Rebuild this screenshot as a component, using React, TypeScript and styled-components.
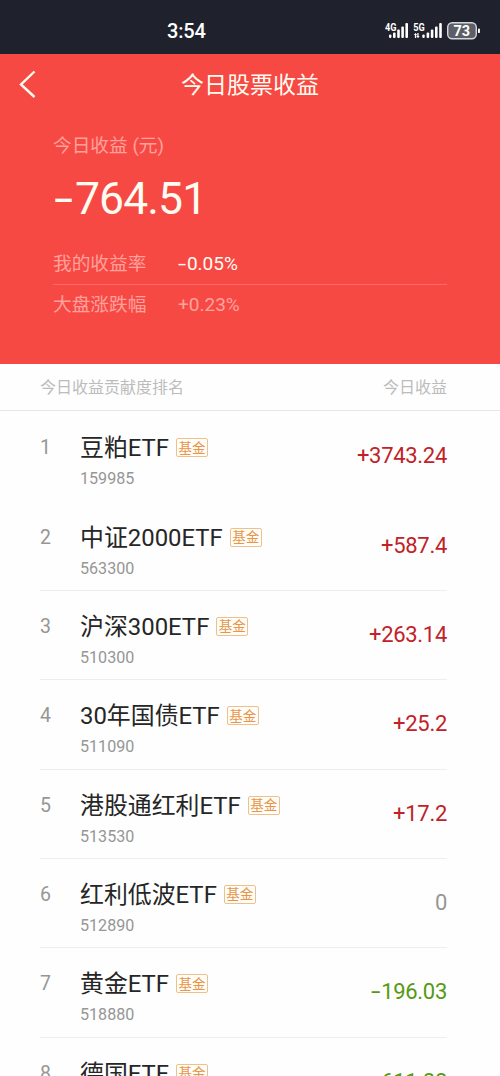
import React from "react";
import styled, { createGlobalStyle } from "styled-components";

const Global = createGlobalStyle`
  * { box-sizing: border-box; }
  html, body { margin: 0; padding: 0; }
  body {
    width: 500px;
    height: 1076px;
    overflow: hidden;
    background: #fefefe;
    font-family: Roboto, "Noto Sans CJK SC", sans-serif;
    white-space: nowrap;
  }
`;

const Screen = styled.div`
  width: 500px;
  height: 1076px;
  overflow: hidden;
  display: flex;
  flex-direction: column;
`;

const StatusBar = styled.header`
  flex: none;
  height: 54px;
  background: #1f222d;
  color: #fff;
  display: flex;
  justify-content: space-between;
  padding: 0 19px 0 167px;
`;

const Clock = styled.time`
  font-size: 20px;
  font-weight: 500;
  line-height: 24px;
  letter-spacing: -0.2px;
  margin-top: 19px;
`;

const StatusIcons = styled.div`
  display: flex;
  align-items: center;
  height: 20px;
  margin-top: 20px;
`;

const Hero = styled.section`
  flex: none;
  height: 310px;
  background: #f74944;
  color: #fffdf2;
`;

const NavBar = styled.nav`
  display: grid;
  grid-template-columns: 60px 1fr 60px;
  align-items: center;
  height: 60px;
`;

const BackIcon = styled.svg`
  display: block;
  margin-left: 17px;
`;

const Title = styled.h1`
  margin: 0;
  padding-top: 3px;
  font-size: 23px;
  font-weight: 400;
  line-height: 30px;
  text-align: center;
`;

const Summary = styled.div`
  padding: 17px 53px 0;
`;

const SummaryLabel = styled.div`
  font-size: 18.7px;
  line-height: 30px;
  color: #ffa19c;
`;

const Total = styled.div`
  margin-top: 8px;
  padding-left: 1px;
  font-size: 44.5px;
  letter-spacing: -0.9px;
  line-height: 60px;
  height: 60px;
`;

const MinusBox = styled.span`
  display: inline-block;
  width: 0.47em;
`;

const MinusBar = styled.span`
  display: inline-block;
  transform: scaleX(1.55);
  transform-origin: 0 50%;
`;

const RateRow = styled.div<{ $faded?: boolean }>`
  display: flex;
  height: 40px;
  align-items: center;
  font-size: 18.7px;
  line-height: 30px;
  color: ${(p) => (p.$faded ? "#ffa19c" : "#fffdf2")};
`;

const Rates = styled.div`
  margin-top: 15px;
  ${RateRow} + ${RateRow} { border-top: 1px solid #fb6a65; }
`;

const RateLabel = styled.span`
  width: 125px;
  color: #ffa19c;
`;

const RateValue = styled.span`
  font-size: 19px;
`;

const ListHeader = styled.div`
  flex: none;
  display: flex;
  justify-content: space-between;
  align-items: center;
  height: 47px;
  padding: 2px 53px 0 40px;
  border-bottom: 1px solid #e7e7e7;
  font-size: 16px;
  line-height: 24px;
  color: #bcbcbc;
`;

const List = styled.ol`
  flex: none;
  list-style: none;
  margin: 0;
  padding: 1.2px 53px 0 40px;
`;

const Row = styled.li<{ $divided: boolean }>`
  display: grid;
  grid-template-columns: 40px 1fr auto;
  height: 89.35px;
  padding-top: 18px;
  border-bottom: 1px solid ${(p) => (p.$divided ? "#eeeeee" : "transparent")};
`;

const Rank = styled.span`
  font-size: 19.5px;
  line-height: 35px;
  color: #969696;
`;

const NameLine = styled.div`
  display: flex;
  align-items: center;
  height: 36px;
`;

const Name = styled.span`
  font-size: 23.9px;
  line-height: 36px;
  color: #262626;
`;

const Tag = styled.span`
  display: flex;
  align-items: center;
  justify-content: center;
  width: 32px;
  height: 19px;
  margin-left: 7px;
  margin-bottom: 1px;
  border: 1px solid #efc08c;
  border-radius: 2px;
  background: #fffdf8;
  font-size: 13.5px;
  line-height: 18px;
  color: #e8954a;
`;

const Code = styled.div`
  font-size: 16.1px;
  line-height: 25px;
  color: #969696;
`;

const tones = { up: "#c02227", down: "#559a10", flat: "#969696" };

const Amount = styled.span<{ $tone: keyof typeof tones }>`
  margin-top: 10px;
  font-size: 22px;
  letter-spacing: -0.3px;
  line-height: 32px;
  color: ${(p) => tones[p.$tone]};
`;

const holdings: { name: string; code: string; amount: string; tone: keyof typeof tones }[] = [
  { name: "豆粕ETF", code: "159985", amount: "+3743.24", tone: "up" },
  { name: "中证2000ETF", code: "563300", amount: "+587.4", tone: "up" },
  { name: "沪深300ETF", code: "510300", amount: "+263.14", tone: "up" },
  { name: "30年国债ETF", code: "511090", amount: "+25.2", tone: "up" },
  { name: "港股通红利ETF", code: "513530", amount: "+17.2", tone: "up" },
  { name: "红利低波ETF", code: "512890", amount: "0", tone: "flat" },
  { name: "黄金ETF", code: "518880", amount: "-196.03", tone: "down" },
  { name: "德国ETF", code: "513030", amount: "-611.88", tone: "down" },
];

/* Figures below zero get a longer minus bar than the font's hyphen. */
const Figure = ({ value }: { value: string }) =>
  value.startsWith("-") ? (
    <>
      <MinusBox>
        <MinusBar>-</MinusBar>
      </MinusBox>
      {value.slice(1)}
    </>
  ) : (
    <>{value}</>
  );

const StatusGlyphs = () => (
  <svg width="96" height="20" viewBox="385 20 96 20" fill="#fff" fontFamily="Roboto, sans-serif">
    <text x="385" y="30.5" fontSize="10" fontWeight="700" textLength="11.5" lengthAdjust="spacingAndGlyphs">4G</text>
    <rect x="389" y="34.5" width="2.4" height="3.5" rx="1" />
    <rect x="393" y="32.5" width="2.6" height="5.5" rx="1" />
    <rect x="397.2" y="29.5" width="2.6" height="8.5" rx="1" />
    <rect x="401.3" y="26.5" width="2.6" height="11.5" rx="1" />
    <rect x="405.4" y="23" width="2.6" height="15" rx="1" />
    <text x="413.3" y="30.5" fontSize="10" fontWeight="700" textLength="11.5" lengthAdjust="spacingAndGlyphs">5G</text>
    <path d="M413.8 35l1.7-2 1.7 2h-1v3h-1.3v-3zM416.4 36l1.6 2.2 1.6-2.2h-1v-3h-1.3v3z" />
    <rect x="422.3" y="34.5" width="2.4" height="3.5" rx="1" />
    <rect x="426.6" y="32.5" width="2.6" height="5.5" rx="1" />
    <rect x="430.8" y="29.5" width="2.6" height="8.5" rx="1" />
    <rect x="435" y="26.5" width="2.6" height="11.5" rx="1" />
    <rect x="439.2" y="23" width="2.6" height="15" rx="1" />
    <rect x="447.7" y="22.7" width="28.6" height="16" rx="4.5" fill="#5c5f68" stroke="#d5d6d9" strokeWidth="1.4" />
    <text x="461.7" y="36" fontSize="14.5" fontWeight="700" textAnchor="middle">73</text>
    <rect x="478" y="28.5" width="1.9" height="4.6" rx="0.9" />
  </svg>
);

export default function App() {
  return (
    <Screen>
      <Global />
      <StatusBar>
        <Clock>3:54</Clock>
        <StatusIcons>
          <StatusGlyphs />
        </StatusIcons>
      </StatusBar>
      <Hero>
        <NavBar>
          <BackIcon width="22" height="30" viewBox="0 0 22 30" fill="none" stroke="#fffdf2" strokeWidth="2.4">
            <path d="M17.5 2.5 4 15.5l13.5 12.5" />
          </BackIcon>
          <Title>今日股票收益</Title>
        </NavBar>
        <Summary>
          <SummaryLabel>今日收益 (元)</SummaryLabel>
          <Total>
            <Figure value="-764.51" />
          </Total>
          <Rates>
            <RateRow>
              <RateLabel>我的收益率</RateLabel>
              <RateValue>
                <Figure value="-0.05%" />
              </RateValue>
            </RateRow>
            <RateRow $faded>
              <RateLabel>大盘涨跌幅</RateLabel>
              <RateValue>
                <Figure value="+0.23%" />
              </RateValue>
            </RateRow>
          </Rates>
        </Summary>
      </Hero>
      <ListHeader>
        <span>今日收益贡献度排名</span>
        <span>今日收益</span>
      </ListHeader>
      <List>
        {holdings.map((h, i) => (
          <Row key={h.code} $divided={i > 0}>
            <Rank>{i + 1}</Rank>
            <div>
              <NameLine>
                <Name>{h.name}</Name>
                <Tag>基金</Tag>
              </NameLine>
              <Code>{h.code}</Code>
            </div>
            <Amount $tone={h.tone}>
              <Figure value={h.amount} />
            </Amount>
          </Row>
        ))}
      </List>
    </Screen>
  );
}
